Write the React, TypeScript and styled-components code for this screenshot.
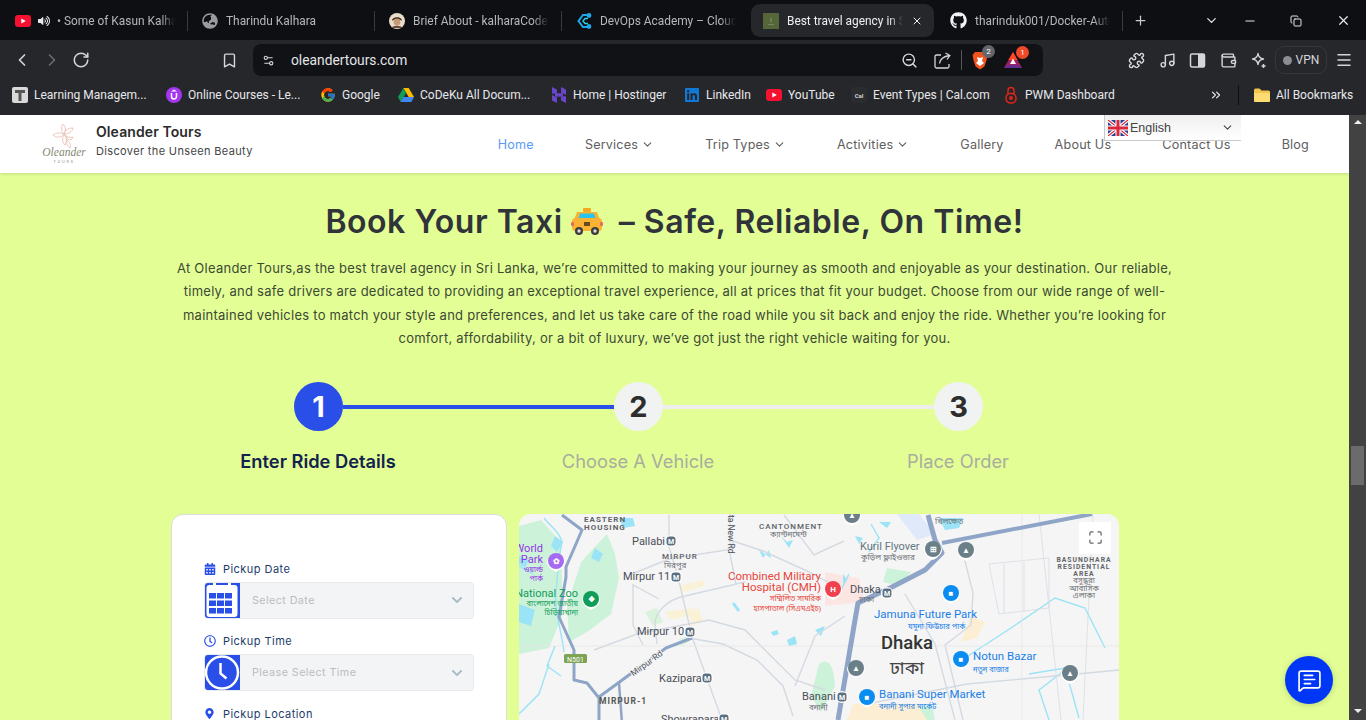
import React from 'react'
import styled, { createGlobalStyle } from 'styled-components'
import {
  ChevronDown,
  ChevronLeft,
  ChevronRight,
  ChevronsRight,
  Bookmark,
  Copy,
  Maximize,
  Menu,
  MessageSquareText,
  Minus,
  Music,
  Plus,
  Puzzle,
  RotateCw,
  Settings2,
  Wallet,
  X,
  ZoomOut,
} from 'lucide-react'
import { FaCalendarAlt, FaChevronDown, FaGithub, FaGlobeAsia, FaLinkedin, FaMapMarkerAlt, FaRegClock, FaVolumeUp } from 'react-icons/fa'
import { FcGoogle } from 'react-icons/fc'

const GlobalStyle = createGlobalStyle`
  html, body {
    margin: 0;
    padding: 0;
    height: 720px;
    overflow: hidden;
    background: #e3fe95;
  }
  * { box-sizing: border-box; }
`

const uiFont = `Roboto, 'Liberation Sans', sans-serif`
const pageFont = `Inter, 'Open Sans', sans-serif`
const bengali = `'Noto Sans Bengali', 'Noto Sans', sans-serif`

const Shell = styled.div`
  display: flex;
  flex-direction: column;
  width: 1366px;
  height: 720px;
  overflow: hidden;
  position: relative;
  font-family: ${pageFont};
`

const TabStrip = styled.div`
  display: flex;
  align-items: center;
  height: 40px;
  background: #0e0f13;
  padding: 1px 0 0 1px;
  font-family: ${uiFont};
`

const Tab = styled.div<{ $active?: boolean; $sep?: boolean }>`
  display: flex;
  align-items: center;
  flex: none;
  gap: 8px;
  width: ${({ $active }) => ($active ? '183px' : '187px')};
  height: 33px;
  margin: ${({ $active }) => ($active ? '0 2px' : '0')};
  padding: 0 ${({ $active }) => ($active ? '10px' : '12px')} 0 ${({ $active }) => ($active ? '12px' : '14px')};
  border-radius: 9px;
  font-size: 11.9px;
  color: ${({ $active }) => ($active ? '#eeeff1' : '#b6b7bb')};
  background: ${({ $active }) => ($active ? '#26272b' : 'transparent')};
  border-right: 1px solid ${({ $sep }) => ($sep ? '#3a3b3f' : 'transparent')};
  ${({ $sep }) => $sep && 'border-radius: 0; height: 20px;'}
`

const TabTitle = styled.span`
  flex: 1;
  overflow: hidden;
  white-space: nowrap;
  -webkit-mask-image: linear-gradient(90deg, #000 88%, transparent);
  mask-image: linear-gradient(90deg, #000 88%, transparent);
`

const Speaker = styled.span`
  display: flex;
  margin: 0 -1px;
  color: #e8e8ea;
`

const NewTab = styled.div`
  display: flex;
  flex: none;
  margin-left: 10px;
  color: #c8c9cc;
`

const WindowControls = styled.div`
  display: flex;
  align-items: center;
  flex: none;
  margin-left: 51px;
  color: #e6e6e8;
`

const WinButton = styled.span<{ $w: number }>`
  display: flex;
  justify-content: center;
  flex: none;
  width: ${({ $w }) => $w}px;
`

const Toolbar = styled.div`
  display: flex;
  align-items: center;
  height: 40px;
  background: #26272b;
  padding-left: 12px;
  color: #d5d6d9;
  font-family: ${uiFont};
`

const NavIcons = styled.div`
  display: flex;
  align-items: center;
  gap: 10px;
  width: 209px;
`

const BookmarkIcon = styled.div`
  display: flex;
  width: 32px;
`

const UrlBar = styled.div`
  display: flex;
  align-items: center;
  width: 790px;
  height: 32px;
  background: #111216;
  border-radius: 8px;
  padding: 0 21px 0 9px;
  gap: 16px;
`

const UrlText = styled.span`
  flex: 1;
  font-size: 13.8px;
  color: #e4e5e8;
`

const UrlActions = styled.div`
  display: flex;
  align-items: center;
  gap: 16px;
`

const ShieldBadge = styled.span<{ $bg: string }>`
  position: absolute;
  top: -6px;
  right: -7px;
  width: 13px;
  height: 13px;
  border-radius: 50%;
  background: ${({ $bg }) => $bg};
  color: #fff;
  font-size: 8px;
  line-height: 13px;
  text-align: center;
`

const BadgeIcon = styled.span`
  position: relative;
  display: flex;
`

const VSep = styled.span`
  width: 1px;
  height: 20px;
  background: #56575b;
  margin: 0 -6px;
`

const RightTools = styled.div`
  display: flex;
  align-items: center;
  gap: 13.5px;
  margin-left: 85px;
`

const VpnPill = styled.div`
  display: flex;
  align-items: center;
  gap: 4px;
  width: 52px;
  height: 28px;
  padding-left: 7px;
  margin: 0 -5px 0 -6px;
  border: 1px solid #36373b;
  border-radius: 9px;
  font-size: 12px;
  color: #d5d6d9;
`

const VpnDot = styled.span`
  display: block;
  width: 9px;
  height: 9px;
  border-radius: 50%;
  background: #8b8d93;
`

const BookmarkBar = styled.div`
  display: flex;
  align-items: center;
  height: 35px;
  background: #26272b;
  padding: 0 0 5px 12px;
  color: #e7e8ea;
  font-family: ${uiFont};
  font-size: 12px;
`

const BookmarkItem = styled.div<{ $w: number }>`
  display: flex;
  align-items: center;
  gap: 6px;
  width: ${({ $w }) => $w}px;
  white-space: nowrap;
  overflow: hidden;
`

const BarEnd = styled.div`
  display: flex;
  align-items: center;
  margin-left: 91px;
  gap: 6px;
`

const BarSep = styled.span`
  width: 1px;
  height: 20px;
  background: #0e0f13;
  margin: 0 9px;
`

const Viewport = styled.div`
  display: flex;
  flex: 1;
  min-height: 0;
`

const Page = styled.div`
  flex: 1;
  min-width: 0;
  overflow: hidden;
  position: relative;
`

const Scrollbar = styled.div`
  display: flex;
  flex-direction: column;
  align-items: center;
  width: 17px;
  background: #424242;
  padding-top: 5px;
  color: #eee;
`

const ScrollUp = styled.span`
  width: 0;
  height: 0;
  border: 4px solid transparent;
  border-top: 0;
  border-bottom: 4px solid #eee;
`

const ScrollDown = styled.span`
  width: 0;
  height: 0;
  border: 4px solid transparent;
  border-bottom: 0;
  border-top: 4px solid #eee;
  margin-top: auto;
  margin-bottom: 7px;
`

const ScrollThumb = styled.span`
  display: block;
  width: 13px;
  height: 39px;
  margin-top: 322px;
  background: #6b6b6b;
`

const Header = styled.header`
  display: flex;
  align-items: center;
  height: 58px;
  background: #fff;
  padding: 0 40px;
  box-shadow: 0 1px 3px rgba(0, 0, 0, 0.14);
  position: relative;
`

const Brand = styled.div`
  display: flex;
  align-items: center;
  gap: 8px;
  width: 420px;
`

const BrandText = styled.div`
  display: flex;
  flex-direction: column;
  gap: 4px;
  padding-bottom: 8px;
`

const BrandName = styled.span`
  font-size: 14px;
  font-weight: 600;
  color: #2b2b2b;
  letter-spacing: 0.1px;
`

const BrandTag = styled.span`
  font-size: 11px;
  letter-spacing: 0.35px;
  color: #444;
`

const Nav = styled.nav`
  display: flex;
  align-items: center;
  gap: 51px;
  margin-left: auto;
`

const NavLink = styled.a<{ $active?: boolean }>`
  display: flex;
  align-items: center;
  gap: 3px;
  font-size: 12.6px;
  letter-spacing: 0.2px;
  color: ${({ $active }) => ($active ? '#5b9bf5' : '#5e5e5e')};
  white-space: nowrap;
`

const LangSelect = styled.div`
  position: absolute;
  top: 0;
  left: 1104px;
  display: flex;
  align-items: center;
  gap: 2px;
  width: 137px;
  height: 26px;
  padding: 0 7px 0 3px;
  background: linear-gradient(#efefef, #fff);
  border-left: 1px solid #c9c9c9;
  border-bottom: 1px solid #c9c9c9;
  font-family: 'Liberation Sans', sans-serif;
  font-size: 12.5px;
  color: #444;
`

const LangLabel = styled.span`
  flex: 1;
`

const Main = styled.main`
  display: flex;
  flex-direction: column;
  align-items: center;
  background: #e3fe95;
  height: 547px;
  padding-top: 30px;
`

const Title = styled.h1`
  display: flex;
  align-items: center;
  margin: 0;
  font-size: 32px;
  line-height: 38px;
  font-weight: 600;
  letter-spacing: 0.55px;
  color: #30343a;
`

const TaxiSlot = styled.span`
  display: flex;
  margin: 0 15px 0 7px;
`

const Intro = styled.p`
  width: 1004px;
  margin: 16px 0 0;
  font-size: 13px;
  line-height: 23.4px;
  letter-spacing: 0.25px;
  text-align: center;
  color: #3c4a34;
`

const Booking = styled.div`
  width: 960px;
  margin: 31px 0 0 -73px;
`

const StepRow = styled.div`
  display: flex;
  align-items: center;
  padding-left: 136px;
`

const StepDot = styled.div<{ $on?: boolean }>`
  display: flex;
  align-items: center;
  justify-content: center;
  flex: none;
  width: 49px;
  height: 49px;
  border-radius: 50%;
  font-size: 29px;
  font-weight: 700;
  background: ${({ $on }) => ($on ? '#2a4ee8' : '#f1f2f2')};
  color: ${({ $on }) => ($on ? '#fff' : '#2d2d2d')};
`

const StepLine = styled.div<{ $on?: boolean }>`
  width: 271px;
  height: 4px;
  margin-top: 2px;
  background: ${({ $on }) => ($on ? '#2a4ee8' : '#eeeeee')};
`

const StepLabels = styled.div`
  display: grid;
  grid-template-columns: repeat(3, 320px);
  margin-top: 17px;
`

const StepLabel = styled.div<{ $on?: boolean }>`
  text-align: center;
  font-size: 18.3px;
  line-height: 26px;
  font-weight: ${({ $on }) => ($on ? 600 : 400)};
  color: ${({ $on }) => ($on ? '#13234f' : '#a9ad9e')};
`

const Panels = styled.div`
  display: flex;
  gap: 12px;
  margin: 40px 0 0 13px;
`

const FormCard = styled.div`
  flex: none;
  width: 336px;
  height: 300px;
  padding: 47px 32px 0;
  background: #fff;
  border: 1px solid #dcdcdc;
  border-radius: 12px;
`

const Field = styled.div`
  margin-bottom: 15.5px;
`

const FieldLabel = styled.div<{ $gap: number }>`
  display: flex;
  align-items: center;
  gap: ${({ $gap }) => $gap}px;
  height: 14px;
  font-size: 11px;
  letter-spacing: 0.45px;
  color: #1d3b6b;
`

const LabelIcon = styled.span`
  display: flex;
  color: #2a4ee8;
`

const SelectBox = styled.div`
  display: flex;
  align-items: center;
  height: 37px;
  margin-top: 6px;
  background: #f3f4f6;
  border: 1px solid #e7e9ec;
  border-radius: 4px;
  overflow: hidden;
  color: #a8bbc3;
  padding-right: 10px;
`

const SelectText = styled.span`
  flex: 1;
  padding-left: 12px;
  font-size: 10.8px;
  letter-spacing: 0.4px;
  color: #bdbdbd;
`

const IconBlock = styled.div`
  display: flex;
  flex: none;
  width: 36px;
  height: 37px;
  margin-left: -1px;
`

const MapFrame = styled.div`
  position: relative;
  flex: none;
  width: 600px;
  height: 300px;
  background: #f5f5f5;
  border-radius: 12px;
  overflow: hidden;
  font-family: Roboto, 'Liberation Sans', sans-serif;
`

const FullscreenBtn = styled.div`
  position: absolute;
  top: 8px;
  left: 560px;
  display: flex;
  align-items: center;
  justify-content: center;
  width: 32px;
  height: 32px;
  background: #fff;
  color: #666;
`

const ChatFab = styled.div`
  position: absolute;
  top: 656px;
  left: 1285px;
  display: flex;
  align-items: center;
  justify-content: center;
  width: 48px;
  height: 48px;
  border-radius: 50%;
  background: #0036f5;
  color: #fff;
  box-shadow: 0 1px 6px rgba(0, 0, 0, 0.18);
`

const YoutubeIcon = () => (
  <svg width="16" height="12" viewBox="0 0 16 12">
    <rect width="16" height="12" rx="3" fill="#f5112f" />
    <path d="M6.3 3.4 10.8 6 6.3 8.6z" fill="#fff" />
  </svg>
)

const AvatarIcon = () => (
  <svg width="16" height="16" viewBox="0 0 16 16">
    <circle cx="8" cy="8" r="8" fill="#e8dccb" />
    <path d="M3 8c0-5 10-5 10 0-1-2-9-2-10 0z" fill="#3b2a20" />
    <circle cx="8" cy="9" r="3.4" fill="#c79a78" />
    <path d="M2.5 15c1-3 10-3 11 0z" fill="#6a4a36" />
  </svg>
)

const DevopsIcon = () => (
  <svg width="16" height="16" viewBox="0 0 16 16" fill="none" stroke="#1fa8e8" strokeWidth="2">
    <path d="M12 2H7L2.5 8 7 14h5" />
    <circle cx="13" cy="2.5" r="1.4" fill="#1fa8e8" />
    <circle cx="13" cy="13.5" r="1.4" fill="#1fa8e8" />
    <path d="M12 5.5H9L7 8l2 2.5h3" stroke="#2ad0e8" strokeWidth="1.5" />
  </svg>
)

const ActiveFavicon = () => (
  <svg width="16" height="16" viewBox="0 0 16 16">
    <rect width="16" height="16" fill="#55663a" />
    <path d="M8 4c1.500 1.500 1.500 4 0 6-1.500-2-1.500-4.500 0-6z" fill="#6f8050" />
    <rect x="5" y="11" width="6" height="1" fill="#76875a" />
  </svg>
)

const ShareIcon = () => (
  <svg width="17" height="17" viewBox="0 0 17 17" fill="none" stroke="currentColor" strokeWidth="1.300">
    <path d="M7 3H2.500A1.500 1.500 0 0 0 1 4.500v10A1.500 1.500 0 0 0 2.500 16h11a1.500 1.500 0 0 0 1.500-1.500V12" />
    <path d="M5.500 11.500c.5-4 3.500-7 10-8M11.500 1l4.300 2.500L13 7.500" />
  </svg>
)

const BraveIcon = () => (
  <svg width="16" height="19" viewBox="0 0 16 19">
    <path d="M3 1h10l2.400 3-1 5.500-2 6L8 18.600 3.600 15.500l-2-6L.6 4z" fill="#f1531f" />
    <path d="M5 6l3 1 3-1-1 4 2 2-4 3-4-3 2-2z" fill="#fff" />
  </svg>
)

const BatIcon = () => (
  <svg width="18" height="16" viewBox="0 0 18 16">
    <path d="M9 0l9 16H0z" fill="#9e1f63" />
    <path d="M9 0l4.600 8H4.400z" fill="#ff4724" />
    <path d="M9 6.500l3 5.500H6z" fill="#fff" />
    <path d="M0 16l4-3h10l4 3z" fill="#662d91" />
  </svg>
)

const SidebarIcon = () => (
  <svg width="17" height="17" viewBox="0 0 17 17">
    <rect x="1.500" y="2" width="14" height="13" rx="1.500" fill="none" stroke="currentColor" strokeWidth="1.500" />
    <rect x="9" y="2" width="6.500" height="13" fill="currentColor" />
  </svg>
)

const LeoIcon = () => (
  <svg width="17" height="17" viewBox="0 0 17 17" fill="none" stroke="currentColor" strokeWidth="1.400" strokeLinejoin="round">
    <path d="M8 1.500c.5 3.500 2 5 5.500 5.500-3.500.5-5 2-5.500 5.500C7.500 9 6 7.500 2.500 7 6 6.500 7.500 5 8 1.500z" />
    <path d="M13.500 12v4M11.500 14h4" />
  </svg>
)

const LmsIcon = () => (
  <svg width="16" height="16" viewBox="0 0 16 16">
    <rect width="16" height="16" rx="2" fill="#d9d9d9" />
    <path d="M3 3h10v3H9.500v8h-3V6H3z" fill="#555" />
  </svg>
)

const UdemyIcon = () => (
  <svg width="16" height="16" viewBox="0 0 16 16">
    <circle cx="8" cy="8" r="8" fill="#a435f0" />
    <path d="M5.500 6v3.500a2.500 2.500 0 0 0 5 0V6" fill="none" stroke="#fff" strokeWidth="1.500" />
    <path d="M8 2.500 11 4.500H5z" fill="#fff" />
  </svg>
)

const DriveIcon = () => (
  <svg width="16" height="14" viewBox="0 0 16 14">
    <path d="M5.300 0h5.400L16 9h-5.300z" fill="#fbbc04" />
    <path d="M5.300 0 0 9l2.700 5 5.300-9z" fill="#0f9d58" />
    <path d="M2.700 14h10.600L16 9H5.300z" fill="#4285f4" />
  </svg>
)

const HostingerIcon = () => (
  <svg width="16" height="16" viewBox="0 0 16 16" fill="#6747c7">
    <path d="M1 0l5 2.600v4.200H1zM15 16l-5-2.600V9.200h5zM10 0l5 2.500v5.500l-5-2.500zM1 8l5 2.500V16l-5-2.500z" />
    <path d="M4 6.200h8v3.500H4z" />
  </svg>
)

const CalIcon = () => (
  <svg width="16" height="16" viewBox="0 0 16 16">
    <rect width="16" height="16" rx="3" fill="#2b2c2f" />
    <text x="8" y="10.500" textAnchor="middle" fontSize="6" fontWeight="700" fill="#d6d6d6" fontFamily="Roboto, sans-serif">
      Cal
    </text>
  </svg>
)

const PwmIcon = () => (
  <svg width="16" height="18" viewBox="-2 0 16 18" fill="none" stroke="#e1251b" strokeWidth="1.500">
    <path d="M3 8V4.500a3 3 0 0 1 6 0V8" />
    <rect x="1" y="7.500" width="10" height="9.500" rx="4.500" />
    <circle cx="6" cy="12" r="1.200" fill="#e1251b" />
  </svg>
)

const FolderIcon = () => (
  <svg width="16" height="14" viewBox="0 0 16 14">
    <path d="M0 2a1.500 1.500 0 0 1 1.500-1.500h4L7.500 2.500h7A1.500 1.500 0 0 1 16 4v8.500a1.500 1.500 0 0 1-1.500 1.500h-13A1.500 1.500 0 0 1 0 12.500z" fill="#f2c64c" />
    <path d="M0 5h16v7.500a1.500 1.500 0 0 1-1.500 1.500h-13A1.500 1.500 0 0 1 0 12.500z" fill="#fbdb72" />
  </svg>
)

const FlagIcon = () => (
  <svg width="20" height="16" viewBox="0 0 20 16">
    <rect width="20" height="16" fill="#2a3f8f" />
    <path d="M0 0l20 16M20 0L0 16" stroke="#fff" strokeWidth="3.500" />
    <path d="M0 0l20 16M20 0L0 16" stroke="#d8283a" strokeWidth="1.200" />
    <path d="M10 0v16M0 8h20" stroke="#fff" strokeWidth="5" />
    <path d="M10 0v16M0 8h20" stroke="#d8283a" strokeWidth="3" />
  </svg>
)

const LogoMark = () => (
  <svg width="48" height="44" viewBox="0 0 48 44">
    <g fill="none" stroke="#eabfb2" strokeWidth="0.900">
      <path d="M24 12c-3-3-3-7-1-10 3 3 3 7 1 10z" />
      <path d="M24 12c1-4 4-6 9-6-1 4-4 6-9 6z" />
      <path d="M24 12c-4-2-8-1-11 1 3 3 8 3 11-1z" />
      <path d="M24 12c2 3 6 4 9 3-1 4-6 4-9-3z" />
      <path d="M24 12c-2 4-2 8 1 11 2-4 2-8-1-11z" />
      <path d="M27 18c3 2 4 5 3 8-3-2-4-5-3-8z" />
    </g>
    <text x="24" y="34" textAnchor="middle" fontFamily="'Liberation Serif', serif" fontStyle="italic" fontSize="11.500" fill="#7f8a72">
      Oleander
    </text>
    <text x="24" y="41" textAnchor="middle" fontFamily="Inter, sans-serif" fontSize="3.800" letterSpacing="1.600" fill="#888">
      TOURS
    </text>
  </svg>
)

const TaxiIcon = () => (
  <svg width="34" height="30" viewBox="0 0 34 30">
    <rect x="13" y="1" width="8" height="4" rx="1" fill="#f7a823" />
    <path d="M7 5h20l3 8H4z" fill="#f9b233" />
    <path d="M10 6.500h14l2 6H8z" fill="#29c5ee" />
    <path d="M2 14c0-2 2-3 4-3h22c2 0 4 1 4 3v7c0 2-1 3-3 3H5c-2 0-3-1-3-3z" fill="#f9b233" />
    <rect x="14" y="15" width="6" height="4" fill="#6a4a1c" />
    <rect x="1" y="15" width="3" height="4" rx="1" fill="#e66a6a" />
    <rect x="30" y="15" width="3" height="4" rx="1" fill="#e66a6a" />
    <circle cx="9" cy="24" r="4" fill="#3c3c3c" />
    <circle cx="9" cy="24" r="1.700" fill="#ddd" />
    <circle cx="25" cy="24" r="4" fill="#3c3c3c" />
    <circle cx="25" cy="24" r="1.700" fill="#ddd" />
  </svg>
)

const CalendarBlock = () => (
  <svg width="36" height="37" viewBox="0 0 36 37">
    <rect width="36" height="37" fill="#2a4ee8" />
    <rect x="2.500" y="3" width="31" height="32" rx="3" fill="#fff" />
    <rect x="9" y="0" width="3" height="5" fill="#fff" />
    <rect x="24" y="0" width="3" height="5" fill="#fff" />
    <g fill="#2a4ee8">
      {[11, 18.5, 26].map(y =>
        [5, 13, 21].map(x => <rect key={`${x}-${y}`} x={x} y={y} width="7" height="5.500" />),
      )}
    </g>
  </svg>
)

const ClockBlock = () => (
  <svg width="36" height="37" viewBox="0 0 36 37">
    <rect width="36" height="37" fill="#2a4ee8" />
    <circle cx="18" cy="18.500" r="16" fill="none" stroke="#fff" strokeWidth="2.500" />
    <path d="M16.500 9v10.500l6 5" fill="none" stroke="#fff" strokeWidth="2.500" />
  </svg>
)

const Metro = ({ x, y, label = 'M' }: { x: number; y: number; label?: string }) => (
  <g>
    <circle cx={x} cy={y} r="6" fill="#fff" />
    <rect x={x - 4.5} y={y - 4.5} width="9" height="9" rx="3" fill="#5c6f80" />
    <text x={x} y={y + 2.5} textAnchor="middle" fontSize="7" fontWeight="700" fill="#fff">
      {label}
    </text>
  </g>
)

const Pin = ({ x, y, color, r = 8, glyph }: { x: number; y: number; color: string; r?: number; glyph: string }) => (
  <g>
    <path d={`M${x - r - 1} ${y + 2}a${r + 1} ${r + 1} 0 1 1 ${2 * r + 2} 0q-2 6-${r + 1} 9q-${r - 1}-3-${r + 1}-9z`} fill="#fff" />
    <circle cx={x} cy={y} r={r} fill={color} />
    <text x={x} y={y + 3} textAnchor="middle" fontSize="8" fontWeight="700" fill="#fff">
      {glyph}
    </text>
  </g>
)

const Water = ({ d }: { d: string }) => <path d={d} fill="none" stroke="#9be3f6" strokeWidth="1.400" />

const CityMap = () => (
  <svg width="600" height="300" viewBox="0 0 600 300">
    <rect width="600" height="300" fill="#f5f5f5" />
    <path d="M0 12 22 6 42 28 44 100 30 134 0 140z" fill="#cdf2da" />
    <path d="M62 48 88 20 96 40 100 64 92 100 68 118 50 128 48 92z" fill="#cdf2da" />
    <path d="M300 150q14-10 16 22l-14 26-10-16zM392 58l-12 14-16-4 4-14zM385 196l28-6 3 16h-30z" fill="#cdf2da" />
    <path d="M126 98l12-4 6 14-10 4zM160 126l8-4 2 6-8 4z" fill="#d9f3dd" />
    <path d="M306 58l34 6 6 24-40 4z" fill="#fbe6e4" />
    <path d="M160 72l24-6 2 6-22 6zM146 98l28-4 4 6-26 6zM170 100l10-6 4 14-12 4z" fill="#faf2d6" />
    <path d="M334 190h64l10 16h-80zM452 102l14 6-8 16-16 4z" fill="#fbeed3" />
    <path d="M378 0h22l16 20-18 6z" fill="#e0e9f9" />
    <path d="M0 90l16 6-4 16-12-4zM36 22l8 6-6 10-6-6zM76 34l8 6-4 8-8-4zM100 4h14l2 8-12 2zM0 42l10 4-4 8-6-4z" fill="#9be3f6" />
    <path d="M213 90l6 8 2-2-6-8zM252 118l6-2 2 4-6 2zM324 60l4 6-4 4zM336 22l8 2-4 6zM360 8h12l-4 6zM268 126l8-4 2 8-8 2zM296 116l10-4-4 10zM240 36l4 8 6-8 2 8zM262 22l6 6 6-2-4 8zM420 4h24l-4 10-14 2z" fill="#9be3f6" />

    <g>
      <Water d="M25 4c6 8 16 14 18 24-4 16-4 30-6 50-2 20 6 40 8 60" />
      <Water d="M30 150 20 180 0 200" />
      <Water d="M36 132l-8 20 14 10" />
      <Water d="M440 150l12-10 40-26 44-30 30 10 20 40" />
      <Water d="M510 160l36-6 14 50M530 206l-10-30 26-20" />
      <Water d="M352 10l8 14-10 14M330 60l-10 20" />
      <Water d="M0 52l14 8" />
    </g>

    <g fill="none" stroke="#d3dae2" strokeWidth="1.400">
      <path d="M150 1v32l9 30 14 60 30 83" />
      <path d="M113 60 150 45l64-10 0-8 30 10 44 20 30 16" />
      <path d="M136 110c0-10 10-24 30-28l60-14" />
      <path d="M75 136 118 120 190 106l36 10 30 30 20 20 30 10" />
      <path d="M170 124l34 6 34 16 26 26 10 30" />
      <path d="M136 110 138 130M140 85l-26-14v40l10 20" />
      <path d="M211 0v40l6 30" />
      <path d="M276 172l20-50 30-20M265 1l30 40 30-14" />
      <path d="M444 39l10 40-2 32-26 20 18 75" />
      <path d="M386 80l30 50 20 76" />
      <path d="M348 190l100-20 110-10 42-4" />
      <path d="M470 50l60-6v50l-50 6zM485 50v50M505 48v50" strokeWidth="0.700" />
      <path d="M520 0l22 206M574 0l-10 206" strokeWidth="0.700" />
    </g>
    <path d="M0 132h600M503 0v206" stroke="#e6e6e6" strokeWidth="0.800" />
    <g fill="none" stroke="#8fa5c8" strokeLinejoin="round">
      <path d="M43 1 63 16 47 53v10l-7 40 15 33v30l13 3 12 15v30" strokeWidth="3" />
      <path d="M80 183 110 161 147 134 173 124" strokeWidth="3" />
      <path d="M100 169l3 40" strokeWidth="2.500" />
      <path d="M409 1 416 26 423 39 406 56 373 73 339 89 336 106 319 206" strokeWidth="5" />
      <path d="M423 29 573 0" strokeWidth="4" />
    </g>

    <g fontSize="8" fontWeight="700" letterSpacing="1" fill="#5f6368">
      <text x="65" y="8">EASTERN</text>
      <text x="65" y="16">HOUSING</text>
      <text x="143" y="45" fontWeight="500">MIRPUR</text>
      <text x="240" y="15" fontWeight="500">CANTONMENT</text>
      <text x="80" y="190" fontSize="8.500" fill="#555">MIRPUR-1</text>
      <g textAnchor="middle" fontSize="6.800">
        <text x="565" y="48">BASUNDHARA</text>
        <text x="565" y="55">RESIDENTIAL</text>
        <text x="565" y="62">AREA</text>
      </g>
    </g>
    <g fontSize="8" fill="#6e7378" fontFamily={bengali}>
      <text x="145" y="54">মিরপুর</text>
      <text x="251" y="23">ক্যান্টনমেন্ট</text>
      <text x="416" y="10">খিলক্ষেত</text>
      <text x="342" y="46">কুড়িল ফ্লাইওভার</text>
      <text x="340" y="88">ঢাকা</text>
      <text x="290" y="196">বনানী</text>
      <g textAnchor="middle">
        <text x="565" y="69">বসুন্ধরা</text>
        <text x="565" y="77">আবাসিক</text>
        <text x="565" y="84">এলাকা</text>
      </g>
    </g>

    <text fontSize="11" fill="#4a4f55">
      <tspan x="113" y="31">Pallabi</tspan>
      <tspan x="104" y="66">Mirpur 11</tspan>
      <tspan x="118" y="121">Mirpur 10</tspan>
      <tspan x="140" y="168">Kazipara</tspan>
      <tspan x="142" y="209">Showrapara</tspan>
      <tspan x="283" y="186">Banani</tspan>
      <tspan x="331" y="79">Dhaka</tspan>
    </text>
    <text x="341" y="36" fontSize="11" fill="#66757f">Kuril Flyover</text>
    <text x="128" y="152" textAnchor="middle" fontSize="8.500" fill="#4a4f55" transform="rotate(-36 128 150)" stroke="#f5f5f5" strokeWidth="2" paintOrder="stroke">
      Mirpur Rd
    </text>
    <text x="0" y="0" fontSize="8.500" fill="#4a4f55" transform="translate(209 1) rotate(90)">ta New Rd</text>
    <rect x="45" y="140" width="23" height="9" rx="1.500" fill="#7da453" />
    <text x="56.500" y="147.500" textAnchor="middle" fontSize="7" fill="#fff">N501</text>

    <g fill="#9334e6" textAnchor="end" fontSize="11">
      <text x="24" y="38">World</text>
      <text x="24" y="49">Park</text>
      <g fontSize="7.500" fontFamily={bengali}>
        <text x="24" y="58">ওয়ার্ল্ড</text>
        <text x="24" y="67">পার্ক</text>
      </g>
    </g>
    <g fill="#0f9d58" textAnchor="end">
      <text x="59" y="83" fontSize="11">National Zoo</text>
      <g fontSize="7.500" fontFamily={bengali}>
        <text x="59" y="92">বাংলাদেশ জাতীয়</text>
        <text x="59" y="101">চিড়িয়াখানা</text>
      </g>
    </g>
    <g fill="#e8453c">
      <text x="302" y="66" textAnchor="end" fontSize="11.500">Combined Military</text>
      <text x="302" y="77" textAnchor="end" fontSize="11.500">Hospital (CMH)</text>
      <g fontSize="7.500" textAnchor="end" fontFamily={bengali}>
        <text x="302" y="87">সম্মিলিত সামরিক</text>
        <text x="302" y="97">হাসপাতাল (সিএমএইচ)</text>
      </g>
    </g>
    <g fill="#1a7fe8">
      <text x="355" y="104" fontSize="11.500">Jamuna Future Park</text>
      <text x="454" y="146" fontSize="11.500">Notun Bazar</text>
      <text x="360" y="184" fontSize="11.500">Banani Super Market</text>
      <g fontSize="7.500" fontFamily={bengali}>
        <text x="389" y="115">যমুনা ফিউচার পার্ক</text>
        <text x="454" y="158">নতুন বাজার</text>
        <text x="360" y="195">বনানী সুপার মার্কেট</text>
      </g>
    </g>
    <text x="362" y="135" fontSize="18.500" fontWeight="500" fill="#333">Dhaka</text>
    <text x="371" y="160" fontSize="18" fill="#444" fontFamily={bengali}>ঢাকা</text>

    <Metro x={152} y={27} />
    <Metro x={157} y={63} />
    <Metro x={171} y={118} />
    <Metro x={188} y={164} />
    <Metro x={205} y={205} />
    <Metro x={323} y={183} />
    <Metro x={368} y={79} />
    <Pin x={37} y={47} color="#a66bf0" glyph="✿" />
    <Pin x={72} y={85} color="#0f9d58" glyph="❖" />
    <Pin x={314} y={75} color="#f0414f" glyph="H" />
    <Pin x={414} y={35} color="#6a7f88" glyph="⊞" />
    <Pin x={447} y={36} color="#6a7f88" glyph="▲" />
    <Pin x={333} y={1} color="#6a7f88" glyph="▲" />
    <Pin x={337} y={154} color="#6a7f88" glyph="▲" />
    <Pin x={551} y={159} color="#6a7f88" glyph="▲" />
    <Pin x={432} y={79} color="#0a8cf0" glyph="■" />
    <Pin x={442} y={145} color="#0a8cf0" glyph="■" />
    <Pin x={348} y={183} color="#0a8cf0" glyph="■" />
  </svg>
)

const bookmarks = [
  { w: 154, icon: <LmsIcon />, label: 'Learning Managem...' },
  { w: 154, icon: <UdemyIcon />, label: 'Online Courses - Le...' },
  { w: 78, icon: <FcGoogle size={16} />, label: 'Google' },
  { w: 153, icon: <DriveIcon />, label: 'CoDeKu All Docum...' },
  { w: 133, icon: <HostingerIcon />, label: 'Home | Hostinger' },
  { w: 82, icon: <FaLinkedin size={16} color="#1178d8" />, label: 'LinkedIn' },
  { w: 85, icon: <YoutubeIcon />, label: 'YouTube' },
  { w: 152, icon: <CalIcon />, label: 'Event Types | Cal.com' },
  { w: 115, icon: <PwmIcon />, label: 'PWM Dashboard' },
]

const navItems = [
  { label: 'Home', active: true },
  { label: 'Services', caret: true },
  { label: 'Trip Types', caret: true },
  { label: 'Activities', caret: true },
  { label: 'Gallery' },
  { label: 'About Us' },
  { label: 'Contact Us' },
  { label: 'Blog' },
]

export default function App() {
  return (
    <Shell>
      <GlobalStyle />
      <TabStrip>
        <Tab $sep>
          <YoutubeIcon />
          <Speaker>
            <FaVolumeUp size={12} />
          </Speaker>
          <TabTitle>• Some of Kasun Kalhara</TabTitle>
        </Tab>
        <Tab $sep>
          <FaGlobeAsia size={16} color="#9a9ba0" />
          <TabTitle>Tharindu Kalhara</TabTitle>
        </Tab>
        <Tab $sep>
          <AvatarIcon />
          <TabTitle>Brief About - kalharaCodes</TabTitle>
        </Tab>
        <Tab>
          <DevopsIcon />
          <TabTitle>DevOps Academy – Cloud</TabTitle>
        </Tab>
        <Tab $active>
          <ActiveFavicon />
          <TabTitle>Best travel agency in Sri Lanka</TabTitle>
          <X size={12} color="#eee" />
        </Tab>
        <Tab $sep>
          <FaGithub size={17} color="#f2f2f2" />
          <TabTitle>tharinduk001/Docker-Automation</TabTitle>
        </Tab>
        <NewTab>
          <Plus size={15} />
        </NewTab>
        <WindowControls>
          <WinButton $w={24}>
            <ChevronDown size={15} />
          </WinButton>
          <WinButton $w={54}>
            <Minus size={14} />
          </WinButton>
          <WinButton $w={38}>
            <Copy size={12} />
          </WinButton>
          <WinButton $w={56}>
            <X size={15} />
          </WinButton>
        </WindowControls>
      </TabStrip>

      <Toolbar>
        <NavIcons>
          <ChevronLeft size={20} />
          <ChevronRight size={20} color="#6a6b6f" />
          <RotateCw size={18} />
        </NavIcons>
        <BookmarkIcon>
          <Bookmark size={17} />
        </BookmarkIcon>
        <UrlBar>
          <Settings2 size={13} />
          <UrlText>oleandertours.com</UrlText>
          <UrlActions>
            <ZoomOut size={17} />
            <ShareIcon />
            <VSep />
            <BadgeIcon>
              <BraveIcon />
              <ShieldBadge $bg="#63656d">2</ShieldBadge>
            </BadgeIcon>
            <BadgeIcon>
              <BatIcon />
              <ShieldBadge $bg="#f0492a">1</ShieldBadge>
            </BadgeIcon>
          </UrlActions>
        </UrlBar>
        <RightTools>
          <Puzzle size={17} />
          <Music size={17} />
          <SidebarIcon />
          <Wallet size={17} />
          <LeoIcon />
          <VpnPill>
            <VpnDot />
            VPN
          </VpnPill>
          <Menu size={18} />
        </RightTools>
      </Toolbar>

      <BookmarkBar>
        {bookmarks.map(b => (
          <BookmarkItem key={b.label} $w={b.w}>
            {b.icon}
            {b.label}
          </BookmarkItem>
        ))}
        <BarEnd>
          <ChevronsRight size={14} />
          <BarSep />
          <FolderIcon />
          All Bookmarks
        </BarEnd>
      </BookmarkBar>

      <Viewport>
        <Page>
          <Header>
            <Brand>
              <LogoMark />
              <BrandText>
                <BrandName>Oleander Tours</BrandName>
                <BrandTag>Discover the Unseen Beauty</BrandTag>
              </BrandText>
            </Brand>
            <Nav>
              {navItems.map(n => (
                <NavLink key={n.label} $active={n.active}>
                  {n.label}
                  {n.caret && <ChevronDown size={13} />}
                </NavLink>
              ))}
            </Nav>
            <LangSelect>
              <FlagIcon />
              <LangLabel>English</LangLabel>
              <ChevronDown size={13} />
            </LangSelect>
          </Header>

          <Main>
            <Title>
              Book Your Taxi
              <TaxiSlot>
                <TaxiIcon />
              </TaxiSlot>
              – Safe, Reliable, On Time!
            </Title>
            <Intro>
              At Oleander Tours,as the best travel agency in Sri Lanka, we’re committed to making your journey as smooth and enjoyable as your destination. Our reliable, timely, and safe drivers are dedicated to providing an exceptional travel experience, all at prices that fit your budget. Choose from our wide range of well-maintained vehicles to match your style and preferences, and let us take care of the road while you sit back and enjoy the ride. Whether you’re looking for comfort, affordability, or a bit of luxury, we’ve got just the right vehicle waiting for you.
            </Intro>

            <Booking>
              <StepRow>
                <StepDot $on>1</StepDot>
                <StepLine $on />
                <StepDot>2</StepDot>
                <StepLine />
                <StepDot>3</StepDot>
              </StepRow>
              <StepLabels>
                <StepLabel $on>Enter Ride Details</StepLabel>
                <StepLabel>Choose A Vehicle</StepLabel>
                <StepLabel>Place Order</StepLabel>
              </StepLabels>
              <Panels>
                <FormCard>
                  <Field>
                    <FieldLabel $gap={7}>
                      <LabelIcon>
                        <FaCalendarAlt size={12} />
                      </LabelIcon>
                      Pickup Date
                    </FieldLabel>
                    <SelectBox>
                      <IconBlock>
                        <CalendarBlock />
                      </IconBlock>
                      <SelectText>Select Date</SelectText>
                      <FaChevronDown size={12} />
                    </SelectBox>
                  </Field>
                  <Field>
                    <FieldLabel $gap={7}>
                      <LabelIcon>
                        <FaRegClock size={12} />
                      </LabelIcon>
                      Pickup Time
                    </FieldLabel>
                    <SelectBox>
                      <IconBlock>
                        <ClockBlock />
                      </IconBlock>
                      <SelectText>Please Select Time</SelectText>
                      <FaChevronDown size={12} />
                    </SelectBox>
                  </Field>
                  <Field>
                    <FieldLabel $gap={8}>
                      <LabelIcon>
                        <FaMapMarkerAlt size={11} />
                      </LabelIcon>
                      Pickup Location
                    </FieldLabel>
                  </Field>
                </FormCard>
                <MapFrame>
                  <CityMap />
                  <FullscreenBtn>
                    <Maximize size={15} />
                  </FullscreenBtn>
                </MapFrame>
              </Panels>
            </Booking>
          </Main>
        </Page>
        <Scrollbar>
          <ScrollUp />
          <ScrollThumb />
          <ScrollDown />
        </Scrollbar>
      </Viewport>

      <ChatFab>
        <MessageSquareText size={25} strokeWidth={1.6} />
      </ChatFab>
    </Shell>
  )
}
